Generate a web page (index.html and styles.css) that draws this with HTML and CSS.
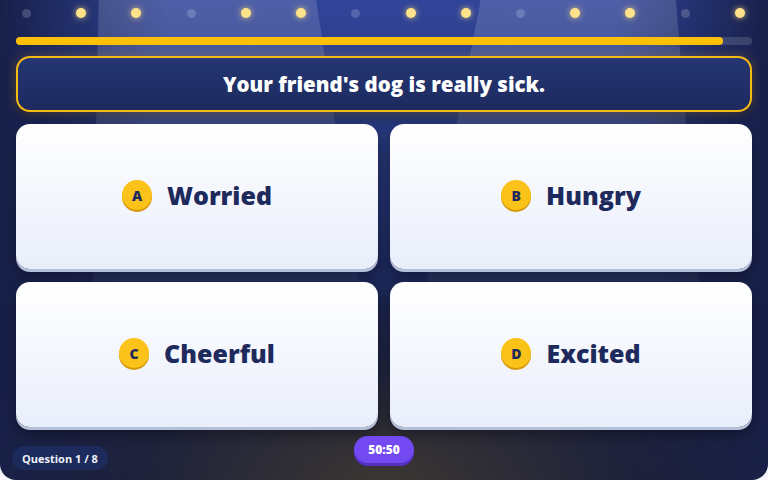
FILE: index.html
```html
<!DOCTYPE html>
<html lang="en">
<head>
<meta charset="UTF-8" />
<title>Quiz – Feelings</title>
<meta name="viewport" content="width=device-width, initial-scale=1" />
<link rel="stylesheet" href="styles.css">
</head>
<body>
  <div class="stage">
    <!-- spotlight beams -->
    <div class="beam beam-left"></div>
    <div class="beam beam-right"></div>

    <div class="lights">
      <span class="dot off"></span>
      <span class="dot"></span>
      <span class="dot"></span>
      <span class="dot off"></span>
      <span class="dot"></span>
      <span class="dot"></span>
      <span class="dot off"></span>
      <span class="dot"></span>
      <span class="dot"></span>
      <span class="dot off"></span>
      <span class="dot"></span>
      <span class="dot"></span>
      <span class="dot off"></span>
      <span class="dot"></span>
    </div>

    <div class="progress"><div class="progress-fill" style="width: 96%"></div></div>

    <div class="question">Your friend's dog is really sick.</div>

    <div class="answers">
      <button class="answer"><span class="badge">A</span><span class="label">Worried</span></button>
      <button class="answer"><span class="badge">B</span><span class="label">Hungry</span></button>
      <button class="answer"><span class="badge">C</span><span class="label">Cheerful</span></button>
      <button class="answer"><span class="badge">D</span><span class="label">Excited</span></button>
    </div>

    <div class="footer">
      <div class="counter">Question 1 / 8</div>
      <button class="lifeline">50:50</button>
      <div></div>
    </div>
  </div>
</body>
</html>
```

FILE: styles.css
```css
:root {
  --navy: #1e2a5c;
  --gold: #fbc21a;
  --font: 'Open Sans', 'Noto Sans', sans-serif;
}

* {
  box-sizing: border-box;
}

html,
body {
  margin: 0;
  padding: 0;
  background: #f4f6fb;
  font-family: var(--font);
}

.stage {
  position: relative;
  width: 768px;
  height: 480px;
  overflow: hidden;
  border-radius: 0 0 16px 16px;
  background:
    radial-gradient(ellipse 55% 42% at 50% 100%, rgba(62, 56, 50, 0.95), rgba(40, 40, 50, 0.4) 60%, transparent 100%),
    linear-gradient(90deg, #18204a 0%, rgba(24, 32, 74, 0) 22%, rgba(24, 32, 74, 0) 80%, #18204a 100%),
    linear-gradient(180deg, #30449a 0%, #263778 30%, #1a2452 65%, #151c40 100%);
}

/* ------------ SPOTLIGHTS ------------- */
.beam {
  position: absolute;
  top: 0;
  height: 420px;
  background: linear-gradient(180deg, rgba(255, 255, 255, 0.15), rgba(255, 255, 255, 0.08) 40%, rgba(255, 255, 255, 0) 100%);
}
.beam-left {
  left: 90px;
  width: 290px;
  clip-path: polygon(3% 0, 78% 0, 100% 100%, 0 100%);
}
.beam-right {
  left: 400px;
  width: 310px;
  clip-path: polygon(26% 0, 89% 0, 100% 100%, 0 100%);
}

/* ------------ TOP ------------- */
.lights {
  position: relative;
  height: 26px;
  padding: 0 23px 0 22px;
  display: flex;
  align-items: center;
  justify-content: space-between;
}
.dot {
  width: 10px;
  height: 10px;
  border-radius: 50%;
  background: #ffe38a;
  box-shadow: 0 0 6px rgba(255, 220, 120, 0.8);
}
.dot.off {
  width: 9px;
  height: 9px;
  background: rgba(255, 255, 255, 0.18);
  box-shadow: none;
}

.progress {
  position: relative;
  margin: 11px 16px 0;
  height: 8px;
  border-radius: 4px;
  background: rgba(255, 255, 255, 0.14);
}
.progress-fill {
  height: 100%;
  border-radius: 4px;
  background: #ffc107;
}

.question {
  position: relative;
  margin: 11px 16px 0;
  height: 56px;
  border: 2px solid #f6bb14;
  border-radius: 14px;
  background: linear-gradient(180deg, #253673, #1c2a5e);
  box-shadow: 0 0 12px rgba(255, 190, 30, 0.25), 0 6px 12px rgba(0, 0, 0, 0.3);
  display: flex;
  align-items: center;
  justify-content: center;
  color: #fff;
  font-size: 20.5px;
  font-weight: 800;
}

/* ------------ ANSWERS ------------- */
.answers {
  position: relative;
  margin: 12px 16px 0;
  display: grid;
  grid-template-columns: 1fr 1fr;
  grid-template-rows: 145px 145px;
  column-gap: 12px;
  row-gap: 13px;
}
.answer {
  border: none;
  border-radius: 14px;
  background: linear-gradient(180deg, #ffffff, #e9eefb);
  box-shadow: 0 3px 0 #b4c0da, 0 8px 14px rgba(0, 0, 0, 0.35);
  display: flex;
  align-items: center;
  justify-content: center;
  gap: 15px;
  padding-bottom: 4px;
  font-family: var(--font);
  cursor: pointer;
}
.badge {
  width: 30px;
  height: 30px;
  border-radius: 50%;
  background: var(--gold);
  box-shadow: 0 2px 0 #d8980b;
  display: flex;
  align-items: center;
  justify-content: center;
  color: var(--navy);
  font-size: 14px;
  font-weight: 800;
}
.label {
  color: var(--navy);
  font-size: 25px;
  font-weight: 800;
}

/* ------------ FOOTER ------------- */
.footer {
  position: relative;
  margin: 0 16px;
  display: grid;
  grid-template-columns: 1fr auto 1fr;
}
.counter {
  justify-self: start;
  margin: 19px 0 0 -4px;
  height: 24px;
  padding: 0 10px;
  border-radius: 12px;
  background: #1d2a5c;
  color: #eef1fb;
  font-size: 11px;
  font-weight: 700;
  display: flex;
  align-items: center;
}
.lifeline {
  margin-top: 9px;
  width: 60px;
  height: 27px;
  border: none;
  border-radius: 14px;
  background: #7349f2;
  box-shadow: 0 3px 0 #5631c4;
  color: #fff;
  font-family: var(--font);
  font-size: 12px;
  font-weight: 800;
  cursor: pointer;
}
```
